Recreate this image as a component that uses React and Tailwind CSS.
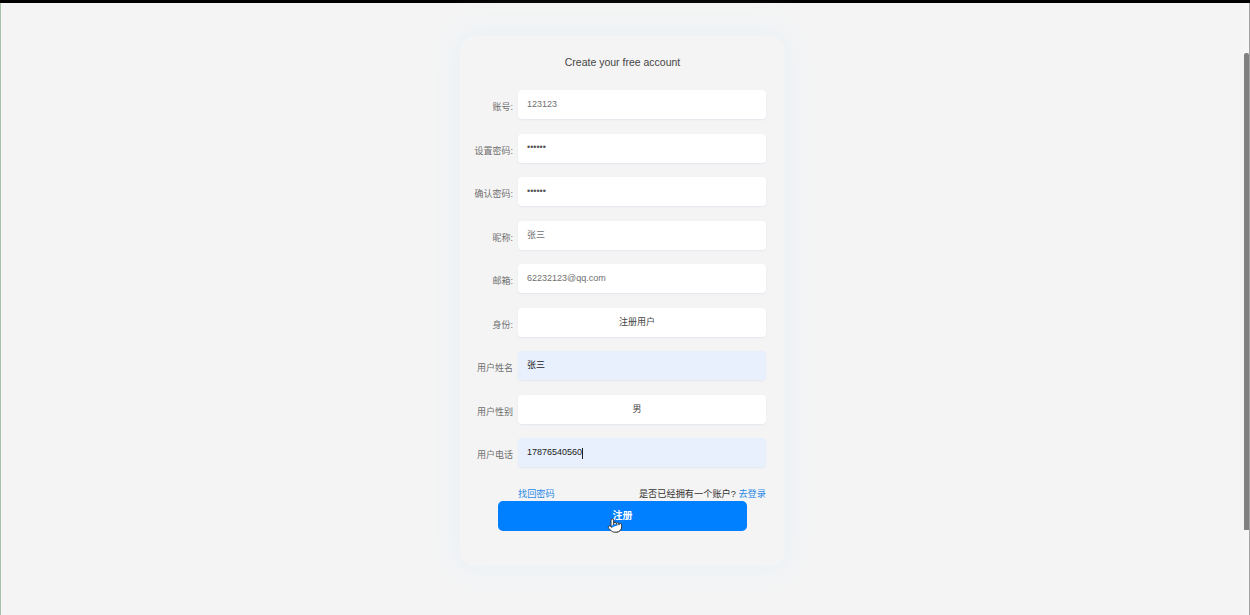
import { Pointer } from 'lucide-react'

const font = "font-['Liberation_Sans','Noto_Sans_CJK_SC',sans-serif]"

const rows = [
  { label: '账号:', value: '123123' },
  { label: '设置密码:', value: '••••••', dark: true },
  { label: '确认密码:', value: '••••••', dark: true },
  { label: '昵称:', value: '张三', cjk: true },
  { label: '邮箱:', value: '62232123@qq.com' },
  { label: '身份:', value: '注册用户', select: true },
  { label: '用户姓名', value: '张三', filled: true, cjk: true },
  { label: '用户性别', value: '男', select: true },
  { label: '用户电话', value: '17876540560', filled: true, caret: true },
]

function Row({ label, value, dark, select, filled, caret, cjk }) {
  return (
    <div className="flex items-center pl-[10px]">
      <label className="w-[43px] mt-[7px] text-right text-[9px] text-[#6f6f6f] whitespace-nowrap">{label}</label>
      <div
        className={`ml-[5px] w-[248px] h-[29px] rounded-[4px] flex items-center text-[9px] shadow-[0_1px_2px_#e2e7ee] ${
          filled ? 'bg-[#e8f0fe] text-[#222222] pt-px' : 'bg-white'
        } ${cjk ? 'pt-[2px]' : ''} ${select ? 'justify-center pr-[10px] pt-[1px] text-[#444444]' : 'pl-[9px]'} ${
          !filled && !select ? (dark ? 'text-[#555555]' : 'text-[#6f6f6f]') : ''
        }`}
      >
        {value}
        {caret && <span className="w-px h-[11px] bg-[#222222]" />}
      </div>
    </div>
  )
}

export default function App() {
  return (
    <div className={`${font} h-[615px] overflow-hidden flex flex-col bg-[#f4f4f4]`}>
      <div className="h-[3px] bg-black shrink-0" />
      <div className="flex flex-1 min-h-0">
        <div className="w-px bg-[#a9c0a9] shrink-0" />
        <main className="flex-1 flex justify-center pt-[33px]">
          <div className="w-[325px] h-[530px] rounded-[16px] bg-[#f4f4f4] shadow-[0_0_24px_12px_#eef2f6] pt-[18px]">
            <h1 className="text-[10.5px] leading-4 text-center text-[#444444]">Create your free account</h1>
            <div className="mt-[20px] flex flex-col gap-[14.5px]">
              {rows.map((r) => (
                <Row key={r.label} {...r} />
              ))}
            </div>
            <div className="mt-[21px] ml-[58px] w-[248px] h-[13px] flex items-center justify-between text-[9.2px]">
              <a className="text-[#2a8ae6]">找回密码</a>
              <span className="text-[#333333]">
                是否已经拥有一个账户? <a className="text-[#2a8ae6]">去登录</a>
              </span>
            </div>
            <div className="relative ml-[38px] w-[249px]">
              <button className="w-full h-[30px] pb-[2px] rounded-[5px] bg-[#007fff] text-white text-[10px] font-bold">注册</button>
              <Pointer
                className="absolute left-[109px] top-[16px] w-[16px] h-[17px]"
                fill="white"
                stroke="#333333"
                strokeWidth={1.5}
              />
            </div>
          </div>
        </main>
        <div className="w-[6px] shrink-0 flex">
          <div className="w-[5px] pt-[50px] pb-[85px] bg-[#f6f6f6] flex">
            <div className="w-full rounded-t-[2px] bg-[#808080]" />
          </div>
          <div className="w-px bg-[#a3a3a3]" />
        </div>
      </div>
    </div>
  )
}
